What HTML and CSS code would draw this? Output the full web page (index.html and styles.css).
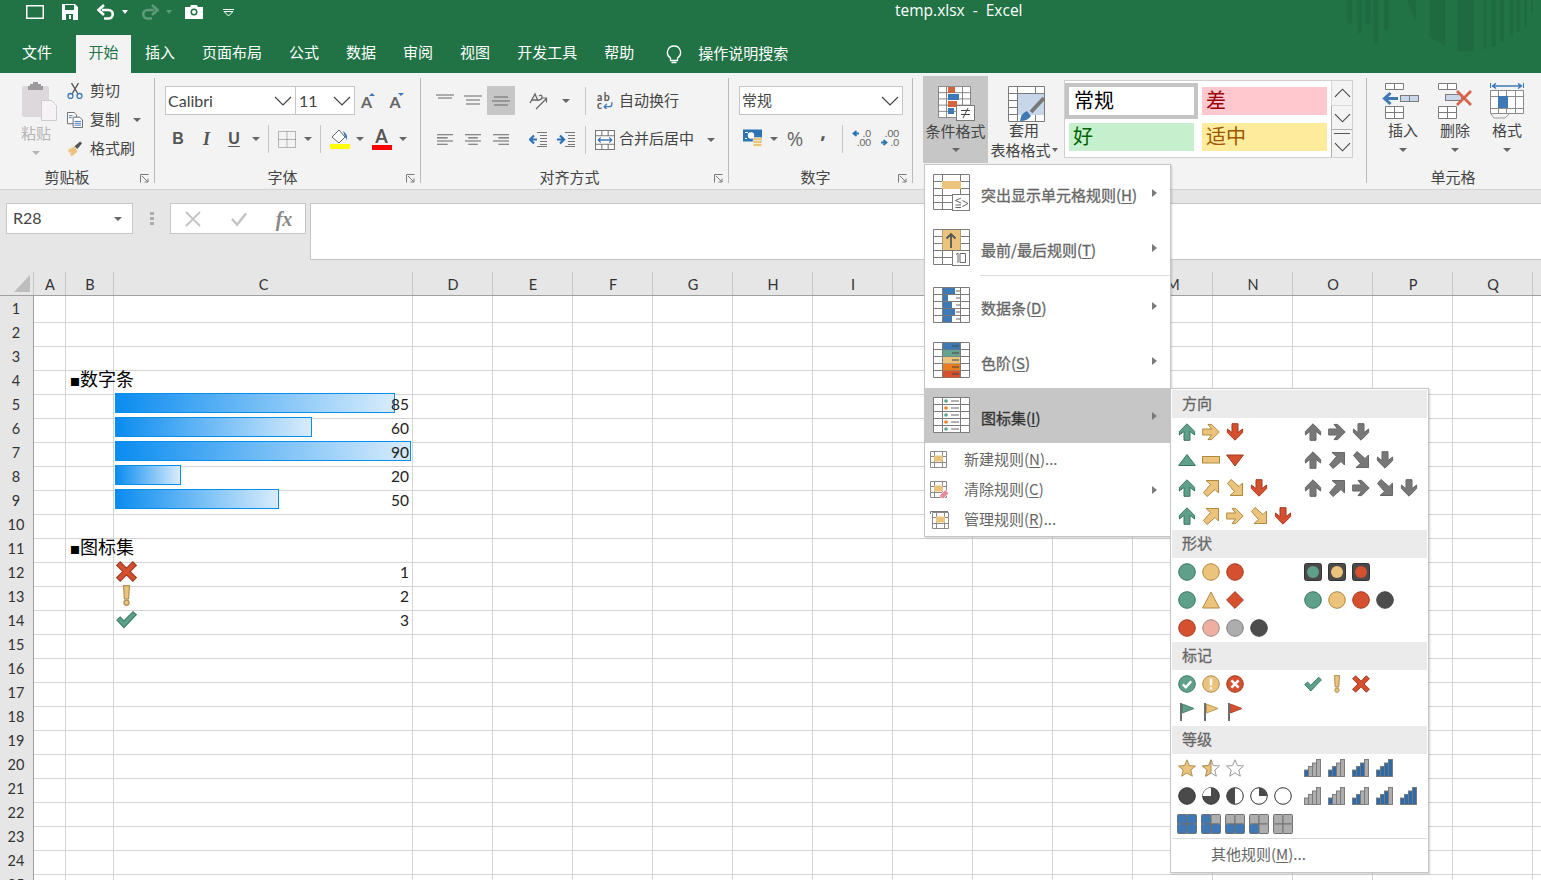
FILE: index.html
```html
<!DOCTYPE html>
<html lang="zh-CN">
<head>
<meta charset="utf-8">
<title>temp.xlsx - Excel</title>
<link rel="stylesheet" href="styles.css">
</head>
<body>
<svg class="defs" xmlns="http://www.w3.org/2000/svg">
  <symbol id="up" viewBox="0 0 18 18"><path d="M9 .8 16.6 8.4V12L12 8.4V17.3H6V8.4L1.4 12V8.4Z" fill="var(--f)" stroke="var(--s)"/></symbol>
  <symbol id="ne" viewBox="0 0 18 18"><path d="M4 1.500H16.500V14L13 10.500 5 17.500 1.500 13.500 8.500 5.500Z" fill="var(--f)" stroke="var(--s)"/></symbol>
  <symbol id="circ" viewBox="0 0 18 18"><circle cx="9" cy="9" r="8.300" fill="var(--f)" stroke="var(--s)"/></symbol>
  <symbol id="tup" viewBox="0 0 18 18"><path d="M9 3.500 17.400 14.500H.6Z" fill="var(--f)" stroke="var(--s)"/></symbol>
  <symbol id="tdn" viewBox="0 0 18 18"><path d="M.6 4H17.400L9 15Z" fill="var(--f)" stroke="var(--s)"/></symbol>
  <symbol id="dash" viewBox="0 0 18 18"><rect x=".5" y="5.500" width="17" height="6.500" fill="var(--f)" stroke="var(--s)"/></symbol>
  <symbol id="tri2" viewBox="0 0 18 18"><path d="M9 1 17.400 17H.6Z" fill="var(--f)" stroke="var(--s)"/></symbol>
  <symbol id="dia" viewBox="0 0 18 18"><path d="M9 .6 17.400 9 9 17.400.6 9Z" fill="var(--f)" stroke="var(--s)"/></symbol>
  <symbol id="lamp" viewBox="0 0 18 18"><rect x=".5" y=".5" width="17" height="17" rx="2" fill="#4a4a4a" stroke="#333"/><circle cx="9" cy="9" r="6" fill="var(--f)"/></symbol>
  <symbol id="ccheck" viewBox="0 0 18 18"><circle cx="9" cy="9" r="8.300" fill="#5ea08a" stroke="#3f7c69"/><path d="M4.800 9.300 7.800 12.300 13.200 6.200" fill="none" stroke="#fff" stroke-width="2.400"/></symbol>
  <symbol id="cexcl" viewBox="0 0 18 18"><circle cx="9" cy="9" r="8.300" fill="#ecc37c" stroke="#ae8e52"/><path d="M9 3.500V10.500M9 12.300V14.500" fill="none" stroke="#fff" stroke-width="2.400"/></symbol>
  <symbol id="cx" viewBox="0 0 18 18"><circle cx="9" cy="9" r="8.300" fill="#d4502e" stroke="#a33a20"/><path d="M5.400 5.400 12.600 12.600M12.600 5.400 5.400 12.600" fill="none" stroke="#fff" stroke-width="2.600"/></symbol>
  <symbol id="check" viewBox="0 0 18 18"><path d="M.8 9.500 3.600 7 6.700 10.300 14.600 2.300 17.400 4.800 6.800 16Z" fill="#5ea08a" stroke="#3f7c69"/></symbol>
  <symbol id="excl" viewBox="0 0 18 18"><path d="M6.500.6H11.500L10.800 12H7.200Z" fill="#ecc37c" stroke="#ae8e52"/><circle cx="9" cy="15.200" r="2.200" fill="#ecc37c" stroke="#ae8e52"/></symbol>
  <symbol id="x" viewBox="0 0 18 18"><path d="M3.600.8 9 6.200 14.400.8 17.400 3.800 12 9 17.400 14.200 14.400 17.200 9 11.800 3.600 17.200.6 14.200 6 9 .6 3.800Z" fill="#d4502e" stroke="#a33a20"/></symbol>
  <symbol id="flag" viewBox="0 0 18 18"><path d="M3 0V18" stroke="#6e6e6e" stroke-width="2" fill="none"/><path d="M4.500 1 16 5.500 4.500 10Z" fill="var(--f)" stroke="var(--s)" stroke-width=".8"/></symbol>
  <symbol id="star" viewBox="0 0 18 18"><path d="M9 .8 11.400 6.600 17.500 7 12.800 11 14.300 17.200 9 13.900 3.700 17.200 5.200 11 .5 7 6.600 6.600Z" fill="#ecc37c" stroke="#ae8e52"/></symbol>
  <symbol id="starh" viewBox="0 0 18 18"><path d="M9 .8 11.400 6.600 17.500 7 12.800 11 14.300 17.200 9 13.900 3.700 17.200 5.200 11 .5 7 6.600 6.600Z" fill="#fff" stroke="#999"/><path d="M9 .8V13.900L3.700 17.200 5.200 11 .5 7 6.600 6.600Z" fill="#ecc37c" stroke="#ae8e52"/></symbol>
  <symbol id="star0" viewBox="0 0 18 18"><path d="M9 .8 11.400 6.600 17.500 7 12.800 11 14.300 17.200 9 13.900 3.700 17.200 5.200 11 .5 7 6.600 6.600Z" fill="#fff" stroke="#999"/></symbol>
  <symbol id="h4" viewBox="0 0 18 18"><circle cx="9" cy="9" r="8.300" fill="#4a4a4a" stroke="#333"/></symbol>
  <symbol id="h3" viewBox="0 0 18 18"><circle cx="9" cy="9" r="8.300" fill="#4a4a4a" stroke="#333"/><path d="M9 9V.7A8.300 8.300 0 0 0 .7 9Z" fill="#fff"/></symbol>
  <symbol id="h2" viewBox="0 0 18 18"><circle cx="9" cy="9" r="8.300" fill="#fff" stroke="#333"/><path d="M9 .7A8.300 8.300 0 0 0 9 17.300Z" fill="#4a4a4a"/></symbol>
  <symbol id="h1" viewBox="0 0 18 18"><circle cx="9" cy="9" r="8.300" fill="#fff" stroke="#333"/><path d="M9 9V.7A8.300 8.300 0 0 1 17.300 9Z" fill="#4a4a4a"/></symbol>
  <symbol id="h0" viewBox="0 0 18 18"><circle cx="9" cy="9" r="8.300" fill="#fff" stroke="#333"/></symbol>
  <symbol id="sig" viewBox="0 0 18 18"><g stroke="#777" stroke-width=".9"><rect x=".5" y="11" width="4" height="6.500" fill="var(--a)"/><rect x="4.500" y="7.500" width="4" height="10" fill="var(--b)"/><rect x="8.500" y="4" width="4" height="13.500" fill="var(--c)"/><rect x="12.500" y=".5" width="4" height="17" fill="var(--d)"/></g></symbol>
  <symbol id="quad" viewBox="0 0 20 20"><g stroke="#707070"><rect x=".5" y=".5" width="9.500" height="9.500" rx="1" fill="var(--a)"/><rect x="10" y=".5" width="9.500" height="9.500" rx="1" fill="var(--b)"/><rect x=".5" y="10" width="9.500" height="9.500" rx="1" fill="var(--c)"/><rect x="10" y="10" width="9.500" height="9.500" rx="1" fill="var(--d)"/></g></symbol>
  <symbol id="gridbig" viewBox="0 0 37 36"><path d="M.5.5H36.500V35.500H.5ZM9.500.5V35.500M27.500.5V35.500M.5 7.500H36.500M.5 14.500H36.500M.5 21.500H36.500M.5 28.500H36.500" fill="#fff" stroke="#7b7b7b"/></symbol>
  <symbol id="gridsm" viewBox="0 0 17 17"><path d="M.5.5H16.500V16.500H.5ZM4.500.5V16.500M12.500.5V16.500M.5 5.500H16.500M.5 11.500H16.500" fill="#fff" stroke="#8a8a8a"/><rect x="4" y="4.500" width="9" height="6" fill="#ecc37c"/></symbol>
  <symbol id="launch" viewBox="0 0 9 9"><path d="M.5 8.500V.5H8.500M2 2 8 8M8 4.500V8H4.500" fill="none" stroke="#7a7a7a"/></symbol>
  <symbol id="chev" viewBox="0 0 18 10"><path d="M1 1 9 9 17 1" fill="none" stroke="#444" stroke-width="1.200"/></symbol>
</svg>

<div class="app">
  <header class="title">
    <svg class="stripes" viewBox="900 0 600 160"><path d="M920 0h15v70h-15zM950 0h13v100h-13zM975 0h15v70h-15zM1000 0h15v132h-15zM1032 0h13v90h-13zM1100 0h28v68zM1168 0h47v138l-47-26zM1253 0h49v155h-49zM1332 0h8v148h-8zM1355 0h13v140h-13zM1382 0h10v125h-10zM1410 0h10v110h-10zM1432 0h8v95h-8zM1455 0h7v80h-7zM1475 0h5v38h-5z" fill="#1f6a41"/></svg>
    <div class="qat">
      <div class="qatbar">
        <svg class="q18" viewBox="0 0 18 14"><rect x=".75" y=".75" width="16.500" height="12.500" fill="none" stroke="#fff" stroke-width="1.500"/></svg>
        <svg class="qsave" viewBox="0 0 16 16"><path d="M0 0H13L16 3V16H0ZM3 1V6H12V1ZM4 10V16H11V10ZM7 11H9V15H7Z" fill="#fff" fill-rule="evenodd"/></svg>
        <svg class="qundo" viewBox="0 0 18 16"><path d="M5 6H11.500A4.200 4.200 0 0 1 11.500 14.500H7" fill="none" stroke="#fff" stroke-width="2.600"/><path d="M7 1 1.500 6 7 11" fill="none" stroke="#fff" stroke-width="2.600"/></svg>
        <span class="qcar"></span>
        <svg class="qredo" viewBox="0 0 18 16"><path d="M13 6H6.500A4.200 4.200 0 0 0 6.500 14.500H11" fill="none" stroke="#5f9a7c" stroke-width="2.600"/><path d="M11 1 16.500 6 11 11" fill="none" stroke="#5f9a7c" stroke-width="2.600"/></svg>
        <span class="qcar dim"></span>
        <svg class="qcam" viewBox="0 0 18 14"><path d="M0 2H5L6 0H12L13 2H18V14H0ZM9 3.500A3.500 3.500 0 1 0 9 10.500 3.500 3.500 0 0 0 9 3.500ZM9 5A2 2 0 1 1 9 9 2 2 0 0 1 9 5Z" fill="#fff" fill-rule="evenodd"/></svg>
        <svg class="qmore" viewBox="0 0 11 8"><path d="M0 .5H11M1 2.500 5.500 7 10 2.500Z" fill="none" stroke="#fff"/></svg>
      </div>
      <div class="doc">temp.xlsx&nbsp; -&nbsp; Excel</div>
    </div>
    <nav class="tabs">
      <span class="tab">文件</span><span class="tab on">开始</span><span class="tab after">插入</span><span class="tab">页面布局</span><span class="tab">公式</span><span class="tab">数据</span><span class="tab">审阅</span><span class="tab">视图</span><span class="tab">开发工具</span><span class="tab">帮助</span>
      <span class="tell">
        <svg class="bulb" viewBox="0 0 16 20"><path d="M8 1A6.500 6.500 0 0 0 4.500 13V15.500H11.500V13A6.500 6.500 0 0 0 8 1ZM5.500 17.500H10.500" fill="none" stroke="#fff" stroke-width="1.300"/></svg>
        <span class="telltxt">操作说明搜索</span>
      </span>
    </nav>
  </header>

  <section class="ribbon">
    <div class="grp g-clip">
      <div class="body clip">
        <div class="paste">
          <svg class="ic-paste" viewBox="0 0 36 39"><rect x="1" y="4" width="27" height="31" rx="2" fill="#dcd8dc"/><path d="M9 4V2H12V0H17V2H20V4H22V8H7V4Z" fill="#9c9a9c"/><path d="M20.500 18.500H30.500L35.500 23.500V38.500H20.500Z" fill="#f6f2f6" stroke="#cfcbcf"/></svg>
          <span class="dimtxt">粘贴</span>
          <span class="car light"></span>
        </div>
        <div class="cliplist">
          <div class="cl"><svg class="i16" viewBox="0 0 16 16"><path d="M11.500 0 5 11M4.500 0 11 11" fill="none" stroke="#555" stroke-width="1.400"/><circle cx="3.500" cy="13" r="2.500" fill="none" stroke="#3d78b5" stroke-width="1.300"/><circle cx="12.500" cy="13" r="2.500" fill="none" stroke="#3d78b5" stroke-width="1.300"/></svg><span class="tx">剪切</span></div>
          <div class="cl"><svg class="i16" viewBox="0 0 17 17"><path d="M.5.5H7.500L10 3V12.500H.5Z" fill="#fff" stroke="#666"/><path d="M6.500 5.500H13.500L16.500 8.500V16.500H6.500Z" fill="#fff" stroke="#666"/><path d="M8 10H15M8 12H15M8 14H15M2 4H6M2 6H5" stroke="#3d78b5"/></svg><span class="tx">复制</span><span class="car cpy"></span></div>
          <div class="cl"><svg class="i16" viewBox="0 0 17 16"><path d="M1 9 8 5 11 11 5 16 3 13 5 11 2 12Z" fill="#ecc37c"/><path d="M8 5 14 0 16 2 11 8Z" fill="#555"/></svg><span class="tx">格式刷</span></div>
        </div>
      </div>
      <div class="lab">剪贴板</div>
      <svg class="launch"><use href="#launch"/></svg>
    </div>

    <div class="grp g-font">
      <div class="body">
        <div class="r1 font1">
          <div class="sel sel-font"><span class="latin">Calibri</span><svg class="chev"><use href="#chev"/></svg></div>
          <div class="sel sel-size"><span class="latin">11</span><svg class="chev"><use href="#chev"/></svg></div>
          <span class="fsz"><span class="fszA">A</span><svg class="tri" viewBox="0 0 6 3"><path d="M0 3 3 0 6 3Z"/></svg></span>
          <span class="fsz"><span class="fszA">A</span><svg class="tri" viewBox="0 0 6 3"><path d="M0 0H6L3 3Z"/></svg></span>
        </div>
        <div class="r2 font2">
          <b class="fb">B</b><i class="fi">I</i><u class="fu">U</u><span class="car"></span><span class="vd"></span>
          <svg class="i18" viewBox="0 0 18 17"><path d="M.5.5H17.500V16.500H.5ZM9 .5V16.500M.5 8.500H17.500" fill="none" stroke="#777" stroke-dasharray="1 1"/></svg>
          <span class="car"></span><span class="vd"></span>
          <svg class="i20" viewBox="0 0 20 20"><path d="M9 1 2 8 9 14 15 8Z" fill="#fff" stroke="#666"/><path d="M13 2Q18 5 17 11L15 8Z" fill="#3d78b5"/><rect y="15" width="20" height="5" fill="#ffff00"/></svg>
          <span class="car"></span>
          <span class="fcolor"><span>A</span></span>
          <span class="car"></span>
        </div>
      </div>
      <div class="lab">字体</div>
      <svg class="launch"><use href="#launch"/></svg>
    </div>

    <div class="grp g-align">
      <div class="body">
        <div class="r1 al1">
          <span class="tb"><svg class="i18" viewBox="0 0 18 14"><path d="M0 1.500H18M2 4.500H16" stroke="#666" fill="none"/></svg></span>
          <span class="tb"><svg class="i18" viewBox="0 0 18 14"><path d="M0 2.500H18M2 6.500H16M2 10.500H16" stroke="#666" fill="none"/></svg></span>
          <span class="tb hl"><svg class="i18" viewBox="0 0 18 14"><path d="M2 3.500H16M0 7.500H18M2 11.500H16" stroke="#666" fill="none"/></svg></span>
          <i></i>
          <svg class="i20" viewBox="0 0 20 20"><path d="M2 12 7 3 10 10M3.500 9H9" fill="none" stroke="#666" stroke-width="1.300"/><path d="M11 5Q14 3 14 6T10 9" fill="none" stroke="#666" stroke-width="1.300"/><path d="M8 18 18 8M14 7H18.500V11.500" fill="none" stroke="#666" stroke-width="1.200"/></svg>
          <span class="car"></span>
          <span class="vd"></span>
          <div class="txtbtn"><span class="wrapi"><span>ab</span><span>c</span><svg viewBox="0 0 9 7"><path d="M1 5H6.500Q8 5 8 2V1M3.500 2.500 1 5 3.500 7.500" fill="none" stroke="#3d78b5" stroke-width="1.200"/></svg></span><span class="tx">自动换行</span></div>
        </div>
        <div class="r2 al2">
          <span class="tb"><svg class="i16" viewBox="0 0 15 13"><path d="M0 1.500H15M0 4.500H10M0 7.500H15M0 10.500H10" stroke="#666" fill="none"/></svg></span>
          <span class="tb"><svg class="i16" viewBox="0 0 15 13"><path d="M0 1.500H15M3 4.500H12M0 7.500H15M3 10.500H12" stroke="#666" fill="none"/></svg></span>
          <span class="tb"><svg class="i16" viewBox="0 0 15 13"><path d="M0 1.500H15M5 4.500H15M0 7.500H15M5 10.500H15" stroke="#666" fill="none"/></svg></span>
          <i></i>
          <span class="tb"><svg class="i18" viewBox="0 0 18 15"><path d="M8 .5H18M11 3.500H18M11 6.500H18M11 9.500H18M11 12.500H18M8 14.500H18" stroke="#777" fill="none"/><path d="M8 7.500H3M5 3.500 1 7.500 5 11.500" stroke="#2d6fb0" stroke-width="2.200" fill="none"/></svg></span>
          <span class="tb"><svg class="i18" viewBox="0 0 18 15"><path d="M8 .5H18M11 3.500H18M11 6.500H18M11 9.500H18M11 12.500H18M8 14.500H18" stroke="#777" fill="none"/><path d="M0 7.500H6M3 3.500 7 7.500 3 11.500" stroke="#2d6fb0" stroke-width="2.200" fill="none"/></svg></span>
          <span class="vd"></span>
          <div class="txtbtn mg"><svg class="i20" viewBox="0 0 19 19"><path d="M.5.5H18.500V18.500H.5ZM.5 5.500H18.500M.5 13.500H18.500M6.500.5V5.500M12.500.5V5.500M6.500 13.500V18.500M12.500 13.500V18.500" fill="#fff" stroke="#777"/><path d="M3 9.500H16M5.500 7 3 9.500 5.500 12M13.500 7 16 9.500 13.500 12" fill="none" stroke="#3d78b5" stroke-width="1.200"/></svg><span class="tx">合并后居中</span></div>
          <span class="car"></span>
        </div>
      </div>
      <div class="lab">对齐方式</div>
      <svg class="launch"><use href="#launch"/></svg>
    </div>

    <div class="grp g-num">
      <div class="body">
        <div class="r1"><div class="sel sel-num"><span class="tx">常规</span><svg class="chev"><use href="#chev"/></svg></div></div>
        <div class="r2 num2">
          <svg class="i20" viewBox="0 0 20 19"><rect width="19" height="12" fill="#2d74b5"/><circle cx="8" cy="6" r="3.200" fill="#fff"/><path d="M2 3H5M2 9H4" stroke="#fff"/><rect x="10" y="8" width="9" height="3" rx="1" fill="#ecc37c" stroke="#fff" stroke-width=".5"/><rect x="10" y="11" width="9" height="3" rx="1" fill="#ecc37c" stroke="#fff" stroke-width=".5"/><rect x="10" y="14" width="9" height="3" rx="1" fill="#ecc37c" stroke="#fff" stroke-width=".5"/></svg>
          <span class="car"></span>
          <span class="pct">%</span>
          <span class="comma">,</span>
          <span class="vd"></span>
          <span class="decb dl"><span>.0</span><span>.00</span><svg viewBox="0 0 8 7"><path d="M7 3.500H2M4.500 1 1.500 3.500 4.500 6" fill="none" stroke="#2d74b5" stroke-width="1.800"/></svg></span>
          <span class="decb dr"><span>.00</span><span>.0</span><svg viewBox="0 0 8 7"><path d="M1 3.500H6M3.500 1 6.500 3.500 3.500 6" fill="none" stroke="#2d74b5" stroke-width="1.800"/></svg></span>
        </div>
      </div>
      <div class="lab">数字</div>
      <svg class="launch"><use href="#launch"/></svg>
    </div>

    <div class="grp g-style">
      <div class="body styles">
        <div class="bigbtn active">
          <svg class="ic37" viewBox="0 0 37 37"><use href="#gridbig" width="33" height="32"/><rect x="10" y="1" width="7" height="6" fill="#d4643e"/><rect x="10" y="8" width="11" height="6" fill="#3f79b5"/><rect x="10" y="15" width="9" height="6" fill="#d4643e"/><rect x="10" y="22" width="6" height="6" fill="#3f79b5"/><rect x="18.500" y="19.500" width="18" height="15" fill="#fff" stroke="#7b7b7b"/><path d="M23 24.500H32M23 28.500H32M30 22 25 32" fill="none" stroke="#444"/></svg>
          <span>条件格式</span>
          <span class="car"></span>
        </div>
        <div class="bigbtn tblfmt">
          <svg class="ic37" viewBox="0 0 37 37"><use href="#gridbig" width="37" height="36"/><rect x="10" y="8" width="26" height="21" fill="#c7d6e8"/><path d="M12 35Q13 27 19 25L23 30Q20 35 12 35Z" fill="#3f79b5"/><path d="M23 26 36 12" stroke="#777" stroke-width="4"/></svg>
          <span>套用</span>
          <span class="tfl">表格格式<span class="car"></span></span>
        </div>
        <div class="gallery">
          <div class="styles-grid">
            <div class="st st-n"><span>常规</span></div>
            <div class="st st-b"><span>差</span></div>
            <div class="st st-g"><span>好</span></div>
            <div class="st st-m"><span>适中</span></div>
          </div>
          <div class="gscroll">
            <div class="gs g-up"><svg class="chev"><use href="#chev"/></svg></div>
            <div class="gs"><svg class="chev"><use href="#chev"/></svg></div>
            <div class="gs g-more"><svg class="chev"><use href="#chev"/></svg></div>
          </div>
        </div>
      </div>
      <div class="lab">样式</div>
    </div>

    <div class="grp g-cells">
      <div class="body cells">
        <div class="cellbtn first">
          <svg class="ic37" viewBox="0 0 37 37"><path d="M3.500.5H21.500V6.500H3.500ZM12.500.5V6.500M3.500 23.500H21.500V35.500H3.500ZM12.500 23.500V35.500M3.500 29.500H21.500" fill="#fff" stroke="#7b7b7b"/><rect x="18.500" y="12.500" width="18" height="6" fill="#c7d6e8" stroke="#7b7b7b"/><path d="M27.500 12.500V18.500" stroke="#7b7b7b"/><path d="M16 15.500H4M8.500 10 2.500 15.500 8.500 21" fill="none" stroke="#3f79b5" stroke-width="3"/></svg>
          <span>插入</span><span class="car"></span>
        </div>
        <div class="cellbtn">
          <svg class="ic37" viewBox="0 0 37 37"><path d="M1.500.5H19.500V6.500H1.500ZM10.500.5V6.500M1.500 23.500H19.500V35.500H1.500ZM10.500 23.500V35.500M1.500 29.500H19.500" fill="#fff" stroke="#7b7b7b"/><rect x="8.500" y="11.500" width="16" height="6" fill="#c7d6e8" stroke="#7b7b7b"/><path d="M20 8 34 22M34 8 20 22" stroke="#d9634a" stroke-width="2.800"/></svg>
          <span>删除</span><span class="car"></span>
        </div>
        <div class="cellbtn">
          <svg class="ic37" viewBox="0 0 37 37"><path d="M1.500 0V5M34.500 0V5" stroke="#3f79b5"/><path d="M4 3H32M7 .5 3.500 3 7 5.500M29 .5 32.500 3 29 5.500" fill="none" stroke="#3f79b5" stroke-width="1.500"/><path d="M1.500 7.500H34.500V30.500H1.500ZM9.500 7.500V30.500M26.500 7.500V30.500M1.500 13.500H34.500M1.500 25.500H34.500M17.500 7.500V13.500M17.500 25.500V30.500" fill="#fff" stroke="#8a8a8a"/><rect x="9" y="13" width="10" height="12" fill="#3f79b5"/><path d="M2 31 5 35H16L20 31" fill="none" stroke="#9a9a9a"/></svg>
          <span>格式</span><span class="car"></span>
        </div>
      </div>
      <div class="lab">单元格</div>
    </div>
  </section>

  <section class="fbar">
    <div class="namebox"><span class="latin">R28</span><span class="car"></span></div>
    <div class="grip"><span></span><span></span><span></span></div>
    <div class="fbtns">
      <svg class="i16" viewBox="0 0 16 16"><path d="M1 1 15 15M15 1 1 15" stroke="#c4c4c4" stroke-width="1.800"/></svg>
      <svg class="i16" viewBox="0 0 17 16"><path d="M1 8 6.500 14 16 2" fill="none" stroke="#c4c4c4" stroke-width="2.600"/></svg>
      <span class="fx">fx</span>
    </div>
    <div class="finput"></div>
  </section>

  <section class="sheet">
    <div class="colhead">
      <div class="corner"><span></span></div>
      <div class="ch a">A</div><div class="ch b">B</div><div class="ch c">C</div>
      <div class="ch">D</div><div class="ch">E</div><div class="ch">F</div><div class="ch">G</div><div class="ch">H</div><div class="ch">I</div><div class="ch">J</div><div class="ch">K</div><div class="ch">L</div><div class="ch">M</div><div class="ch">N</div><div class="ch">O</div><div class="ch">P</div><div class="ch">Q</div><div class="ch">R</div>
    </div>
    <div class="row"><div class="rh">1</div><div class="cell"></div><div class="cell"></div><div class="cell"></div><div class="rest"></div></div>
    <div class="row"><div class="rh">2</div><div class="cell"></div><div class="cell"></div><div class="cell"></div><div class="rest"></div></div>
    <div class="row"><div class="rh">3</div><div class="cell"></div><div class="cell"></div><div class="cell"></div><div class="rest"></div></div>
    <div class="row"><div class="rh">4</div><div class="cell"></div><div class="cell head"><span><span class="bl">■</span>数字条</span></div><div class="cell"></div><div class="rest"></div></div>
    <div class="row"><div class="rh">5</div><div class="cell"></div><div class="cell"></div><div class="cell num"><span class="bar" style="width:280px"></span><span class="v">85</span></div><div class="rest"></div></div>
    <div class="row"><div class="rh">6</div><div class="cell"></div><div class="cell"></div><div class="cell num"><span class="bar" style="width:197px"></span><span class="v">60</span></div><div class="rest"></div></div>
    <div class="row"><div class="rh">7</div><div class="cell"></div><div class="cell"></div><div class="cell num"><span class="bar" style="width:296px"></span><span class="v">90</span></div><div class="rest"></div></div>
    <div class="row"><div class="rh">8</div><div class="cell"></div><div class="cell"></div><div class="cell num"><span class="bar" style="width:66px"></span><span class="v">20</span></div><div class="rest"></div></div>
    <div class="row"><div class="rh">9</div><div class="cell"></div><div class="cell"></div><div class="cell num"><span class="bar" style="width:164px"></span><span class="v">50</span></div><div class="rest"></div></div>
    <div class="row"><div class="rh">10</div><div class="cell"></div><div class="cell"></div><div class="cell"></div><div class="rest"></div></div>
    <div class="row"><div class="rh">11</div><div class="cell"></div><div class="cell head"><span><span class="bl">■</span>图标集</span></div><div class="cell"></div><div class="rest"></div></div>
    <div class="row"><div class="rh">12</div><div class="cell"></div><div class="cell"></div><div class="cell num"><svg class="cicon"><use href="#x"/></svg><span class="v">1</span></div><div class="rest"></div></div>
    <div class="row"><div class="rh">13</div><div class="cell"></div><div class="cell"></div><div class="cell num"><svg class="cicon"><use href="#excl"/></svg><span class="v">2</span></div><div class="rest"></div></div>
    <div class="row"><div class="rh">14</div><div class="cell"></div><div class="cell"></div><div class="cell num"><svg class="cicon"><use href="#check"/></svg><span class="v">3</span></div><div class="rest"></div></div>
    <div class="row"><div class="rh">15</div><div class="cell"></div><div class="cell"></div><div class="cell"></div><div class="rest"></div></div>
    <div class="row"><div class="rh">16</div><div class="cell"></div><div class="cell"></div><div class="cell"></div><div class="rest"></div></div>
    <div class="row"><div class="rh">17</div><div class="cell"></div><div class="cell"></div><div class="cell"></div><div class="rest"></div></div>
    <div class="row"><div class="rh">18</div><div class="cell"></div><div class="cell"></div><div class="cell"></div><div class="rest"></div></div>
    <div class="row"><div class="rh">19</div><div class="cell"></div><div class="cell"></div><div class="cell"></div><div class="rest"></div></div>
    <div class="row"><div class="rh">20</div><div class="cell"></div><div class="cell"></div><div class="cell"></div><div class="rest"></div></div>
    <div class="row"><div class="rh">21</div><div class="cell"></div><div class="cell"></div><div class="cell"></div><div class="rest"></div></div>
    <div class="row"><div class="rh">22</div><div class="cell"></div><div class="cell"></div><div class="cell"></div><div class="rest"></div></div>
    <div class="row"><div class="rh">23</div><div class="cell"></div><div class="cell"></div><div class="cell"></div><div class="rest"></div></div>
    <div class="row"><div class="rh">24</div><div class="cell"></div><div class="cell"></div><div class="cell"></div><div class="rest"></div></div>
    <div class="row"><div class="rh">25</div><div class="cell"></div><div class="cell"></div><div class="cell"></div><div class="rest"></div></div>
  </section>

  <div class="menu">
    <div class="mi">
      <svg class="mic" viewBox="0 0 37 37"><use href="#gridbig" width="37" height="36"/><rect x="9" y="7" width="19" height="8" fill="#ecc37c"/><rect x="19.500" y="20.500" width="17" height="16" fill="#fff" stroke="#7b7b7b"/><path d="M28 24 22.500 26.500 28 29M22.500 31H28M22.500 33.500H28M29.500 26.500 35 29.500 29.500 32.500" fill="none" stroke="#666"/></svg>
      <span class="mt">突出显示单元格规则(<u>H</u>)</span><span class="arr"></span>
    </div>
    <div class="mi">
      <svg class="mic" viewBox="0 0 37 37"><use href="#gridbig" width="37" height="36"/><rect x="9.500" y="1" width="18" height="20" fill="#ecc37c"/><path d="M18 19V5M13.500 9.500 18 5 22.500 9.500" fill="none" stroke="#555" stroke-width="1.800"/><rect x="19.500" y="21.500" width="17" height="15" fill="#fff" stroke="#7b7b7b"/><path d="M23 25.500 25 24V34M27 24.500H32.500V33.500H27Z" fill="none" stroke="#666"/></svg>
      <span class="mt">最前/最后规则(<u>T</u>)</span><span class="arr"></span>
    </div>
    <div class="msep"></div>
    <div class="mi">
      <svg class="mic" viewBox="0 0 37 37"><use href="#gridbig" width="37" height="36"/><path d="M10 1H22V7H10ZM10 8H15V14H10ZM10 15H19V21H10ZM10 22H22V28H10ZM10 29H19V35H10Z" fill="#3f79b5"/><path d="M23 4H27M23 11H27M23 18H27M23 25H27M23 32H27" stroke="#666"/></svg>
      <span class="mt">数据条(<u>D</u>)</span><span class="arr"></span>
    </div>
    <div class="mi">
      <svg class="mic" viewBox="0 0 37 37"><use href="#gridbig" width="37" height="36"/><rect x="10" y="1" width="17" height="6.500" fill="#3f79b5"/><rect x="10" y="8" width="17" height="6.500" fill="#66a28d"/><rect x="10" y="15" width="17" height="6.500" fill="#ecc37c"/><rect x="10" y="22" width="17" height="6.500" fill="#e87d1e"/><rect x="10" y="29" width="17" height="6.500" fill="#d4502e"/><path d="M19 4H26M19 11H26M19 18H26M19 25H26M19 32H26" stroke="#444"/></svg>
      <span class="mt">色阶(<u>S</u>)</span><span class="arr"></span>
    </div>
    <div class="mi cur">
      <svg class="mic" viewBox="0 0 37 37"><use href="#gridbig" width="37" height="36"/><path d="M18 4H26M18 11H26M18 18H26M18 25H26M18 32H26" stroke="#666"/><circle cx="13" cy="4" r="1.800" fill="#5ea08a"/><circle cx="13" cy="11" r="1.800" fill="#e87d1e"/><circle cx="13" cy="18" r="1.800" fill="#5ea08a"/><circle cx="13" cy="25" r="1.800" fill="#e87d1e"/><circle cx="13" cy="32" r="1.800" fill="#5ea08a"/></svg>
      <span class="mt">图标集(<u>I</u>)</span><span class="arr"></span>
    </div>
    <div class="ms"><svg class="msic" viewBox="0 0 20 18"><use href="#gridsm" width="17" height="17"/></svg><span class="tx">新建规则(<u>N</u>)...</span></div>
    <div class="ms"><svg class="msic" viewBox="0 0 20 18"><use href="#gridsm" width="17" height="17"/><path d="M9 15 15 9 19 12 13 18Z" fill="#e98a9b" stroke="#fff" stroke-width=".7"/></svg><span class="tx">清除规则(<u>C</u>)</span><span class="arr"></span></div>
    <div class="ms"><svg class="msic" viewBox="0 0 20 18"><path d="M.5 3V.5H18" fill="none" stroke="#777"/><use href="#gridsm" x="2" y="1" width="17" height="17"/></svg><span class="tx">管理规则(<u>R</u>)...</span></div>
  </div>

  <div class="sub">
    <div class="sh">方向</div>
    <div class="sr"><div class="set"><svg class="si gr"><use href="#up"/></svg><svg class="si ye r90"><use href="#up"/></svg><svg class="si re r180"><use href="#up"/></svg></div><div class="set"><svg class="si gy"><use href="#up"/></svg><svg class="si gy r90"><use href="#up"/></svg><svg class="si gy r180"><use href="#up"/></svg></div></div>
    <div class="sr"><div class="set"><svg class="si gr"><use href="#tup"/></svg><svg class="si ye"><use href="#dash"/></svg><svg class="si re"><use href="#tdn"/></svg></div><div class="set"><svg class="si gy"><use href="#up"/></svg><svg class="si gy"><use href="#ne"/></svg><svg class="si gy fv"><use href="#ne"/></svg><svg class="si gy r180"><use href="#up"/></svg></div></div>
    <div class="sr"><div class="set"><svg class="si gr"><use href="#up"/></svg><svg class="si ye"><use href="#ne"/></svg><svg class="si ye fv"><use href="#ne"/></svg><svg class="si re r180"><use href="#up"/></svg></div><div class="set"><svg class="si gy"><use href="#up"/></svg><svg class="si gy"><use href="#ne"/></svg><svg class="si gy r90"><use href="#up"/></svg><svg class="si gy fv"><use href="#ne"/></svg><svg class="si gy r180"><use href="#up"/></svg></div></div>
    <div class="sr"><div class="set"><svg class="si gr"><use href="#up"/></svg><svg class="si ye"><use href="#ne"/></svg><svg class="si ye r90"><use href="#up"/></svg><svg class="si ye fv"><use href="#ne"/></svg><svg class="si re r180"><use href="#up"/></svg></div></div>
    <div class="sh">形状</div>
    <div class="sr"><div class="set"><svg class="si gr"><use href="#circ"/></svg><svg class="si ye"><use href="#circ"/></svg><svg class="si re"><use href="#circ"/></svg></div><div class="set"><svg class="si gr"><use href="#lamp"/></svg><svg class="si ye"><use href="#lamp"/></svg><svg class="si re"><use href="#lamp"/></svg></div></div>
    <div class="sr"><div class="set"><svg class="si gr"><use href="#circ"/></svg><svg class="si ye"><use href="#tri2"/></svg><svg class="si re"><use href="#dia"/></svg></div><div class="set"><svg class="si gr"><use href="#circ"/></svg><svg class="si ye"><use href="#circ"/></svg><svg class="si re"><use href="#circ"/></svg><svg class="si dk"><use href="#circ"/></svg></div></div>
    <div class="sr"><div class="set"><svg class="si re"><use href="#circ"/></svg><svg class="si pk"><use href="#circ"/></svg><svg class="si lg"><use href="#circ"/></svg><svg class="si dk"><use href="#circ"/></svg></div></div>
    <div class="sh">标记</div>
    <div class="sr"><div class="set"><svg class="si"><use href="#ccheck"/></svg><svg class="si"><use href="#cexcl"/></svg><svg class="si"><use href="#cx"/></svg></div><div class="set"><svg class="si"><use href="#check"/></svg><svg class="si"><use href="#excl"/></svg><svg class="si"><use href="#x"/></svg></div></div>
    <div class="sr"><div class="set"><svg class="si gr"><use href="#flag"/></svg><svg class="si ye"><use href="#flag"/></svg><svg class="si re"><use href="#flag"/></svg></div></div>
    <div class="sh">等级</div>
    <div class="sr"><div class="set"><svg class="si"><use href="#star"/></svg><svg class="si"><use href="#starh"/></svg><svg class="si"><use href="#star0"/></svg></div><div class="set"><svg class="si b1"><use href="#sig"/></svg><svg class="si b2"><use href="#sig"/></svg><svg class="si b3"><use href="#sig"/></svg><svg class="si b4"><use href="#sig"/></svg></div></div>
    <div class="sr"><div class="set"><svg class="si"><use href="#h4"/></svg><svg class="si"><use href="#h3"/></svg><svg class="si"><use href="#h2"/></svg><svg class="si"><use href="#h1"/></svg><svg class="si"><use href="#h0"/></svg></div><div class="set"><svg class="si b0"><use href="#sig"/></svg><svg class="si b1"><use href="#sig"/></svg><svg class="si b2"><use href="#sig"/></svg><svg class="si b3"><use href="#sig"/></svg><svg class="si b4"><use href="#sig"/></svg></div></div>
    <div class="sr"><div class="set"><svg class="sq q4"><use href="#quad"/></svg><svg class="sq q3"><use href="#quad"/></svg><svg class="sq q2"><use href="#quad"/></svg><svg class="sq q1"><use href="#quad"/></svg><svg class="sq q0"><use href="#quad"/></svg></div></div>
    <div class="more"><span>其他规则(<u>M</u>)...</span></div>
  </div>
</div>
</body>
</html>
```

FILE: styles.css
```css
* { box-sizing: border-box; }
html, body { margin: 0; height: 100%; overflow: hidden; }
body { font: 15px/20px "Noto Sans CJK SC", "Noto Sans", sans-serif; color: #444; background: #fff; }
.defs { display: none; }
.app { position: relative; width: 1541px; height: 880px; overflow: hidden; }
u { text-underline-offset: 2px; }
i { font-style: normal; }
.latin { font-family: Lato, "Noto Sans CJK SC", sans-serif; }
.tx { margin-top: -2px; }

/* title */
.title { position: relative; height: 73px; background: #217346; color: #fff; }
.stripes { position: absolute; right: 1px; top: 0; width: 200px; height: 53px; }
.qat { position: relative; display: flex; height: 35px; }
.qatbar { display: flex; align-items: center; width: 895px; height: 24px; padding-left: 26px; }
.q18 { width: 18px; height: 14px; }
.qsave { width: 16px; height: 16px; margin-left: 18px; }
.qundo { width: 18px; height: 16px; margin-left: 19px; }
.qcar { width: 0; height: 0; margin-left: 7px; border: 3.5px solid transparent; border-top: 4px solid #fff; border-bottom: 0; }
.qcar.dim { border-top-color: #5f9a7c; }
.qredo { width: 18px; height: 16px; margin-left: 13px; }
.qcam { width: 18px; height: 14px; margin-left: 13px; }
.qmore { width: 11px; height: 8px; margin-left: 20px; margin-top: 2px; }
.doc { font: 15.5px/20px "Open Sans", sans-serif; white-space: nowrap; }
.tabs { position: relative; display: flex; align-items: stretch; height: 38px; padding-left: 8.5px; line-height: 34px; }
.tab { padding: 0 13.5px; }
.tab.on { margin-left: 10.5px; padding: 0 12.5px; background: #f3f3f3; color: #217346; }
.tab.after { margin-left: .5px; }
.tell { display: flex; align-items: center; margin-left: 18.5px; }
.telltxt { margin-top: -2px; }
.bulb { width: 16px; height: 20px; margin-right: 16px; margin-top: 1px; }

/* ribbon */
.ribbon { display: flex; height: 117px; background: #f3f3f3; border-bottom: 1px solid #d2d2d2; }
.grp { position: relative; height: 105px; margin-top: 5px; border-right: 1px solid #b9b9b9; flex: none; }
.body { height: 88px; display: flow-root; }
.lab { height: 17px; line-height: 22px; text-align: center; padding-right: 20px; white-space: nowrap; }
.launch { position: absolute; right: 5px; bottom: 0; width: 9px; height: 9px; }
.g-clip { width: 155px; }
.g-font { width: 266px; padding-left: 10px; }
.g-align { width: 308px; padding-left: 10px; }
.g-num { width: 184px; padding-left: 10px; }
.g-style { width: 454px; padding-left: 10px; }
.g-cells { flex: 1; border-right: 0; padding-left: 10px; }
.g-cells .lab { padding-right: 12px; }
.car { display: block; width: 0; height: 0; flex: none; justify-self: center; border: 4px solid transparent; border-top: 4px solid #666; border-bottom: 0; }
.car.light { border-top-color: #b5b5b5; }
.i16 { width: 16px; height: 16px; flex: none; }
.i18 { width: 18px; height: 17px; flex: none; }
.i20 { width: 20px; height: 20px; flex: none; }
.ic37 { width: 37px; height: 37px; flex: none; }
.r1, .r2 { display: grid; align-items: center; justify-items: center; }
.r1 { height: 29px; margin-top: 8px; }
.r2 { height: 28px; margin-top: 10px; }
.r1 > i, .r2 > i { display: block; }
.vd { display: block; width: 1px; height: 28px; background: #c6c6c6; }
.tb { display: flex; align-items: center; justify-content: center; width: 28px; height: 29px; }
.tb.hl { background: #c6c6c6; }
.txtbtn { display: flex; align-items: center; justify-self: start; gap: 6px; padding-left: 7px; white-space: nowrap; }
.txtbtn.mg { gap: 4px; padding-left: 5px; }
.txtbtn.mg .tx { margin-top: -4px; }

/* clipboard */
.clip { display: flex; }
.paste { display: flex; flex-direction: column; align-items: center; width: 44px; margin-left: 14px; padding-top: 4px; }
.ic-paste { width: 36px; height: 39px; margin-left: 6px; }
.dimtxt { margin-top: 2px; color: #b5b5b5; }
.paste .car { margin-top: 8px; }
.cliplist { margin-left: 9px; margin-top: -2px; }
.cl { display: flex; align-items: center; height: 29px; gap: 7px; white-space: nowrap; }
.cl .car { margin-left: 6px; }

/* font */
.font1 { grid-template-columns: 131px 59px 30px 27px; }
.font2 { grid-template-columns: 26px 31px 24px 20px 4px 33px 10px 14px 26px 14px 29px 14px; }
.sel { position: relative; display: flex; align-items: center; justify-content: space-between; justify-self: stretch; height: 29px; padding: 0 3px 0 2px; background: #fff; border: 1px solid #c6c6c6; }
.sel + .sel { border-left: 0; }
.sel-size { padding-left: 3px; }
.sel .latin, .namebox .latin { font-size: 16px; }
.chev { width: 18px; height: 10px; }
.sel-num { width: 164px; }
.fsz { display: flex; align-items: flex-start; height: 20px; width: 18px; color: #666; font: 700 16px/22px Lato, sans-serif; }
.tri { width: 6px; height: 3px; margin: 2px 0 0 -3px; fill: #3d78b5; }
.fb, .fi, .fu { font: 700 16px/20px "Liberation Sans", sans-serif; color: #555; }
.fi { font-family: "Liberation Serif", serif; font-style: italic; font-size: 18px; }
.fcolor { display: flex; flex-direction: column; align-items: center; justify-content: flex-end; width: 20px; height: 22px; border-bottom: 5px solid #f00; color: #555; font: 700 18px/17px Lato, sans-serif; }
.wrapi { display: grid; grid-template-columns: 16px; grid-template-rows: 8px 8px; width: 16px; height: 16px; position: relative; font: 700 10.5px/8px Lato, sans-serif; color: #555; letter-spacing: 1.5px; }
.wrapi svg { position: absolute; right: 0; bottom: 0; width: 10px; height: 8px; }

/* align */
.al1 { grid-template-columns: 28px 28px 28px 9px 28px 28px 10px 1fr; }
.al2 { grid-template-columns: 28px 28px 28px 9px 28px 28px 10px 108px 26px; }

/* number */
.g-num .r1 { justify-items: start; }
.num2 { grid-template-columns: 28px 14px 28px 28px 10px 28px 28px; }
.pct { font: 400 20px/28px "Open Sans", sans-serif; color: #666; }
.comma { font: 700 20px/20px "Open Sans", sans-serif; color: #555; margin-top: -16px; }
.decb { position: relative; display: block; width: 20px; height: 20px; font: 400 10px/9px Lato, sans-serif; color: #666; }
.decb span { display: block; text-align: right; }
.decb svg { position: absolute; left: 1px; width: 8px; height: 7px; }
.dl svg { top: 1px; }
.dr svg { top: 10px; }

/* styles */
.styles { display: flex; align-items: flex-start; }
.bigbtn { display: flex; flex-direction: column; align-items: center; flex: none; width: 65px; height: 87px; margin-top: -2px; padding-top: 10px; line-height: 20px; white-space: nowrap; }
.bigbtn.active { background: #c6c6c6; }
.bigbtn .car { margin-top: 7px; }
.bigbtn > span:not(.car) { margin-top: -2px; }
.bigbtn.active > svg { margin-left: 2px; }
.tblfmt { width: 72px; }
.tblfmt > svg { margin-left: 4px; }
.tblfmt > span:not(.car) { margin-top: -3px; }
.tfl { display: flex; align-items: center; height: 20px; margin-top: 0 !important; }
.tfl .car { margin: 0 0 0 1px; border-width: 3.5px; border-top-width: 4px; border-bottom: 0; }
.gallery { display: flex; width: 289px; height: 78px; margin: 2px 0 0 4px; background: #fff; border: 1px solid #d0d0d0; flex: none; }
.styles-grid { display: grid; grid-template-columns: 133px 125px; grid-template-rows: 36px 36px; column-gap: 4px; padding-top: 2px; width: 267px; align-content: start; }
.st { display: flex; align-items: center; height: 28px; margin: 4px 0; font-size: 20px; padding-left: 4px; white-space: nowrap; }
.st span { margin-top: -2px; }
.st-n { width: 133px; height: 36px; margin: 0; border: 4px solid #c4c4c4; background: #fff; color: #000; padding-left: 5px; }
.st-b { background: #ffc7ce; color: #9c0006; }
.st-g { width: 125px; margin-left: 4px; background: #c6efce; color: #006100; }
.st-m { background: #ffeb9c; color: #9c5700; }
.gscroll { display: flex; flex-direction: column; width: 21px; margin-left: auto; }
.gs { display: flex; align-items: center; justify-content: center; height: 24px; border: 1px solid #b0b0b0; border-width: 0 0 1px 1px; background: #f3f3f3; }
.g-up { border-color: #d8d8d8; height: 25px; }
.g-up .chev { transform: rotate(180deg); }
.g-more { flex: 1; height: 28px; border-bottom: 0; border-top: 0; padding-top: 6px; position: relative; }
.g-more::before { content: ""; position: absolute; left: 2px; right: 2px; top: 3px; height: 1px; background: #555; }
.gs .chev { width: 17px; height: 10px; }

/* cells */
.cells { display: flex; }
.cellbtn { display: flex; flex-direction: column; align-items: center; width: 52px; padding-top: 5px; white-space: nowrap; }
.cellbtn .car { margin-top: 8px; }
.cellbtn.first > svg { margin-left: -6px; }

/* formula bar */
.fbar { display: flex; align-items: flex-start; height: 82px; padding: 13px 0 0 6px; background: #e6e6e6; }
.namebox { display: flex; align-items: center; justify-content: space-between; width: 127px; height: 31px; padding: 0 10px 0 6px; background: #fff; border: 1px solid #c6c6c6; }
.namebox .latin { margin-top: -2px; }
.grip { display: flex; flex-direction: column; align-items: center; gap: 2px; width: 37px; padding-top: 9px; }
.grip span { width: 4px; height: 3px; background: #adadad; }
.fbtns { display: grid; grid-template-columns: 44px 48px 42px; align-items: center; justify-items: center; width: 136px; height: 31px; background: #fff; border: 1px solid #c6c6c6; }
.fx { font: italic 700 20px/20px "Liberation Serif", serif; color: #888; }
.finput { flex: 1; height: 57px; margin-left: 4px; background: #fff; border: 1px solid #c6c6c6; border-right: 0; }

/* sheet */
.sheet { height: 608px; overflow: hidden; }
.colhead { display: flex; height: 24px; background: #e6e6e6; border-bottom: 1px solid #9f9f9f; }
.corner { position: relative; width: 34px; flex: none; border-right: 1px solid #c6c6c6; }
.corner span { display: block; width: 0; height: 0; margin: 3px 0 0 14px; border-style: solid; border-width: 0 0 17px 16px; border-color: transparent transparent #bdbdbd transparent; }
.ch { flex: none; width: 80px; padding-left: 1px; font: 14.5px/25px Lato, sans-serif; color: #333; text-align: center; border-right: 1px solid #c6c6c6; }
.ch.a { width: 32px; }
.ch.b { width: 48px; }
.ch.c { width: 299px; }
.row { display: grid; grid-template-columns: 34px 32px 48px 299px 1fr; height: 24px; }
.rh { background: #e6e6e6; border-right: 1px solid #9f9f9f; border-bottom: 1px solid #a8a8a8; font: 14.5px/26px Lato, sans-serif; color: #333; text-align: center; padding-right: 1px; }
.cell { position: relative; border-right: 1px solid #d4d4d4; border-bottom: 1px solid #d4d4d4; }
.rest { border-bottom: 1px solid #d4d4d4; background: repeating-linear-gradient(90deg, transparent 0 79px, #d4d4d4 79px 80px); }
.head > span { position: absolute; left: 4px; top: -3px; font-size: 18px; line-height: 26px; color: #000; white-space: nowrap; }
.bl { font-size: 10px; }
.num { text-align: right; }
.v { position: relative; display: block; padding-right: 3px; font: 15.5px/24px Lato, sans-serif; color: #222; }
.bar { position: absolute; left: 1px; top: 1px; height: 20px; border: 1px solid #0a8cf0; background: linear-gradient(90deg, #0a8cf0, #d8ecfc); }
.cicon { position: absolute; left: 2px; top: 1px; width: 21px; height: 21px; }

/* menu */
.menu { position: absolute; left: 924px; top: 164px; width: 247px; height: 373px; background: #fff; border: 1px solid #c6c6c6; box-shadow: 1px 1px 2px rgba(0,0,0,.18); }
.mi { display: flex; align-items: center; height: 55px; padding: 0 13px 0 8px; color: #666; -webkit-text-stroke: .3px currentColor; }
.mi.cur { background: #c6c6c6; color: #333; }
.mic { width: 37px; height: 37px; flex: none; margin-top: -1px; }
.mt { margin-left: 11px; padding-top: 4px; white-space: nowrap; }
.arr { width: 0; height: 0; margin-left: auto; border: 4px solid transparent; border-left: 5px solid #7a7a7a; border-right: 0; }
.msep { height: 3px; margin-left: 55px; border-top: 1px solid #dcdcdc; }
.ms { display: flex; align-items: center; height: 30px; padding: 0 13px 0 5px; color: #666; }
.mi.cur + .ms { margin-top: 2px; }
.msic { width: 20px; height: 18px; flex: none; margin-right: 14px; }

/* icon sets */
.sub { position: absolute; left: 1170px; top: 388px; width: 259px; height: 485px; padding: 1px 1px 0; background: #fff; border: 1px solid #c6c6c6; box-shadow: 1px 1px 2px rgba(0,0,0,.18); }
.sh { height: 28px; padding-left: 10px; line-height: 26px; background: #ebebeb; color: #666; -webkit-text-stroke: .3px currentColor; }
.sr { display: flex; height: 28px; padding-left: 3px; }
.set { display: flex; align-items: center; width: 128px; }
.si { width: 18px; height: 18px; margin: 0 3px; flex: none; overflow: visible; }
.sq { width: 20px; height: 20px; margin: 0 2px; flex: none; }
.gr { --f: #5ea08a; --s: #3a7563; }
.ye { --f: #ecc37c; --s: #ae8a3e; }
.re { --f: #d4502e; --s: #a33a20; }
.gy { --f: #777; --s: #666; }
.dk { --f: #4d4d4d; --s: #444; }
.pk { --f: #eeaea2; --s: #a08c88; }
.lg { --f: #adadad; --s: #808080; }
.fv { transform: scaleY(-1); }
.r90 { transform: rotate(90deg); }
.r180 { transform: rotate(180deg); }
.b0 { --a: #adadad; --b: #adadad; --c: #adadad; --d: #adadad; }
.b1 { --a: #2f6aa8; --b: #adadad; --c: #adadad; --d: #adadad; }
.b2 { --a: #2f6aa8; --b: #2f6aa8; --c: #adadad; --d: #adadad; }
.b3 { --a: #2f6aa8; --b: #2f6aa8; --c: #2f6aa8; --d: #adadad; }
.b4 { --a: #2f6aa8; --b: #2f6aa8; --c: #2f6aa8; --d: #2f6aa8; }
.q4 { --a: #3f79b5; --b: #3f79b5; --c: #3f79b5; --d: #3f79b5; }
.q3 { --a: #3f79b5; --b: #adadad; --c: #3f79b5; --d: #3f79b5; }
.q2 { --a: #adadad; --b: #adadad; --c: #3f79b5; --d: #3f79b5; }
.q1 { --a: #adadad; --b: #adadad; --c: #3f79b5; --d: #adadad; }
.q0 { --a: #adadad; --b: #adadad; --c: #adadad; --d: #adadad; }
.more { height: 33px; padding-left: 39px; border-top: 1px solid #dcdcdc; line-height: 29px; color: #666; white-space: nowrap; }
```
